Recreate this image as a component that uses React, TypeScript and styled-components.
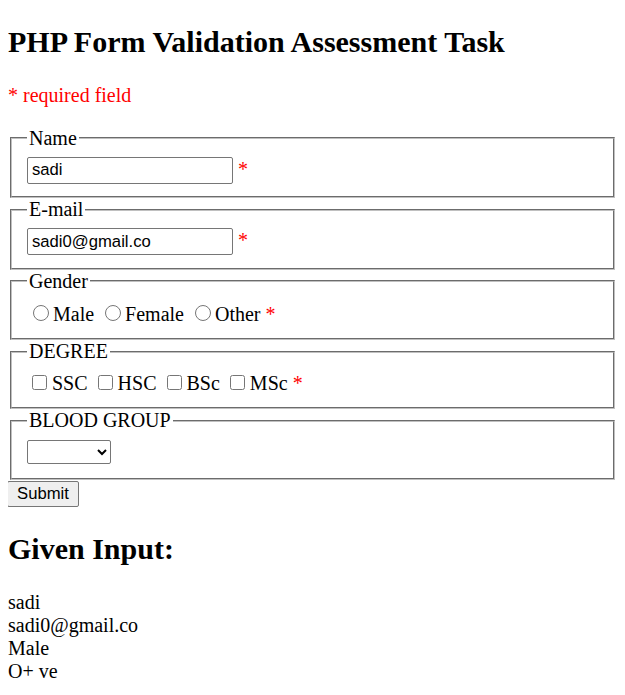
import React from "react";
import styled, { createGlobalStyle } from "styled-components";

const Global = createGlobalStyle`
  html, body {
    padding: 0;
  }
  body {
    margin: 0 8px 8px;
    font-family: "Liberation Serif", "Times New Roman", serif;
    font-size: 20px;
    color: #000;
    background: #fff;
  }
`;

const Title = styled.h2`
  font-size: 30px;
  font-weight: bold;
  margin: 24.9px 0;
`;

const Para = styled.p`
  margin: 20px 0;
`;

const Error = styled.span`
  color: #ff0000;
`;

const Form = styled.form`
  margin: 0;
`;

const Fieldset = styled.fieldset`
  margin: 0 2px;
  padding: 7px 15px 12.5px;
  border: 2px groove rgb(192, 192, 192);
  min-inline-size: min-content;
`;

const Legend = styled.legend`
  padding: 0 2px;
`;

const TextInput = styled.input`
  font-family: "Liberation Sans", Arial, sans-serif;
  font-size: 16.67px;
  width: 206px;
  height: 27px;
  box-sizing: border-box;
  padding: 1px 4px;
  border: 1px solid #767676;
  border-radius: 2px;
  margin: 0;
  vertical-align: baseline;
  color: #000;
  background: #fff;
`;

const Radio = styled.input`
  width: 16px;
  height: 16px;
  margin: 5px 4px 0 6px;
  vertical-align: baseline;
`;

const Check = styled.input`
  width: 15px;
  height: 15px;
  margin: 4.5px 5px 1px 5px;
  vertical-align: baseline;
`;

const Select = styled.select`
  font-family: "Liberation Sans", Arial, sans-serif;
  font-size: 16.67px;
  width: 84px;
  height: 24px;
  box-sizing: border-box;
  border: 1px solid #767676;
  border-radius: 2px;
  background: #fff;
  margin: 1px 0 1px;
`;

const Button = styled.button`
  font-family: "Liberation Sans", Arial, sans-serif;
  font-size: 16.67px;
  width: 72px;
  height: 26px;
  box-sizing: border-box;
  padding: 1px 6px;
  border: 1px solid #767676;
  border-radius: 2px;
  background: #efefef;
  color: #000;
  margin: 1px 0 0 -1px;
`;

const Output = styled.p`
  margin: 24.9px 0 0;
`;

export default function App() {
  return (
    <>
      <Global />
      <Title>PHP Form Validation Assessment Task</Title>
      <Para>
        <Error>* required field</Error>
      </Para>
      <Form onSubmit={(e) => e.preventDefault()}>
        <Fieldset>
          <Legend>Name</Legend>
          <TextInput type="text" defaultValue="sadi" /> <Error>*</Error>
        </Fieldset>
        <Fieldset>
          <Legend>E-mail</Legend>
          <TextInput type="text" defaultValue="sadi0@gmail.co" /> <Error>*</Error>
        </Fieldset>
        <Fieldset>
          <Legend>Gender</Legend>
          <Radio type="radio" name="gender" />Male <Radio type="radio" name="gender" />Female{" "}
          <Radio type="radio" name="gender" />Other <Error>*</Error>
        </Fieldset>
        <Fieldset>
          <Legend>DEGREE</Legend>
          <Check type="checkbox" />SSC <Check type="checkbox" />HSC <Check type="checkbox" />BSc{" "}
          <Check type="checkbox" />MSc <Error>*</Error>
        </Fieldset>
        <Fieldset>
          <Legend>BLOOD GROUP</Legend>
          <Select defaultValue="">
            <option value=""></option>
            <option>A+ ve</option>
            <option>O+ ve</option>
          </Select>
        </Fieldset>
        <Button type="submit">Submit</Button>
      </Form>
      <Title>Given Input:</Title>
      <Output>
        sadi
        <br />
        sadi0@gmail.co
        <br />
        Male
        <br />
        O+ ve
      </Output>
    </>
  );
}
